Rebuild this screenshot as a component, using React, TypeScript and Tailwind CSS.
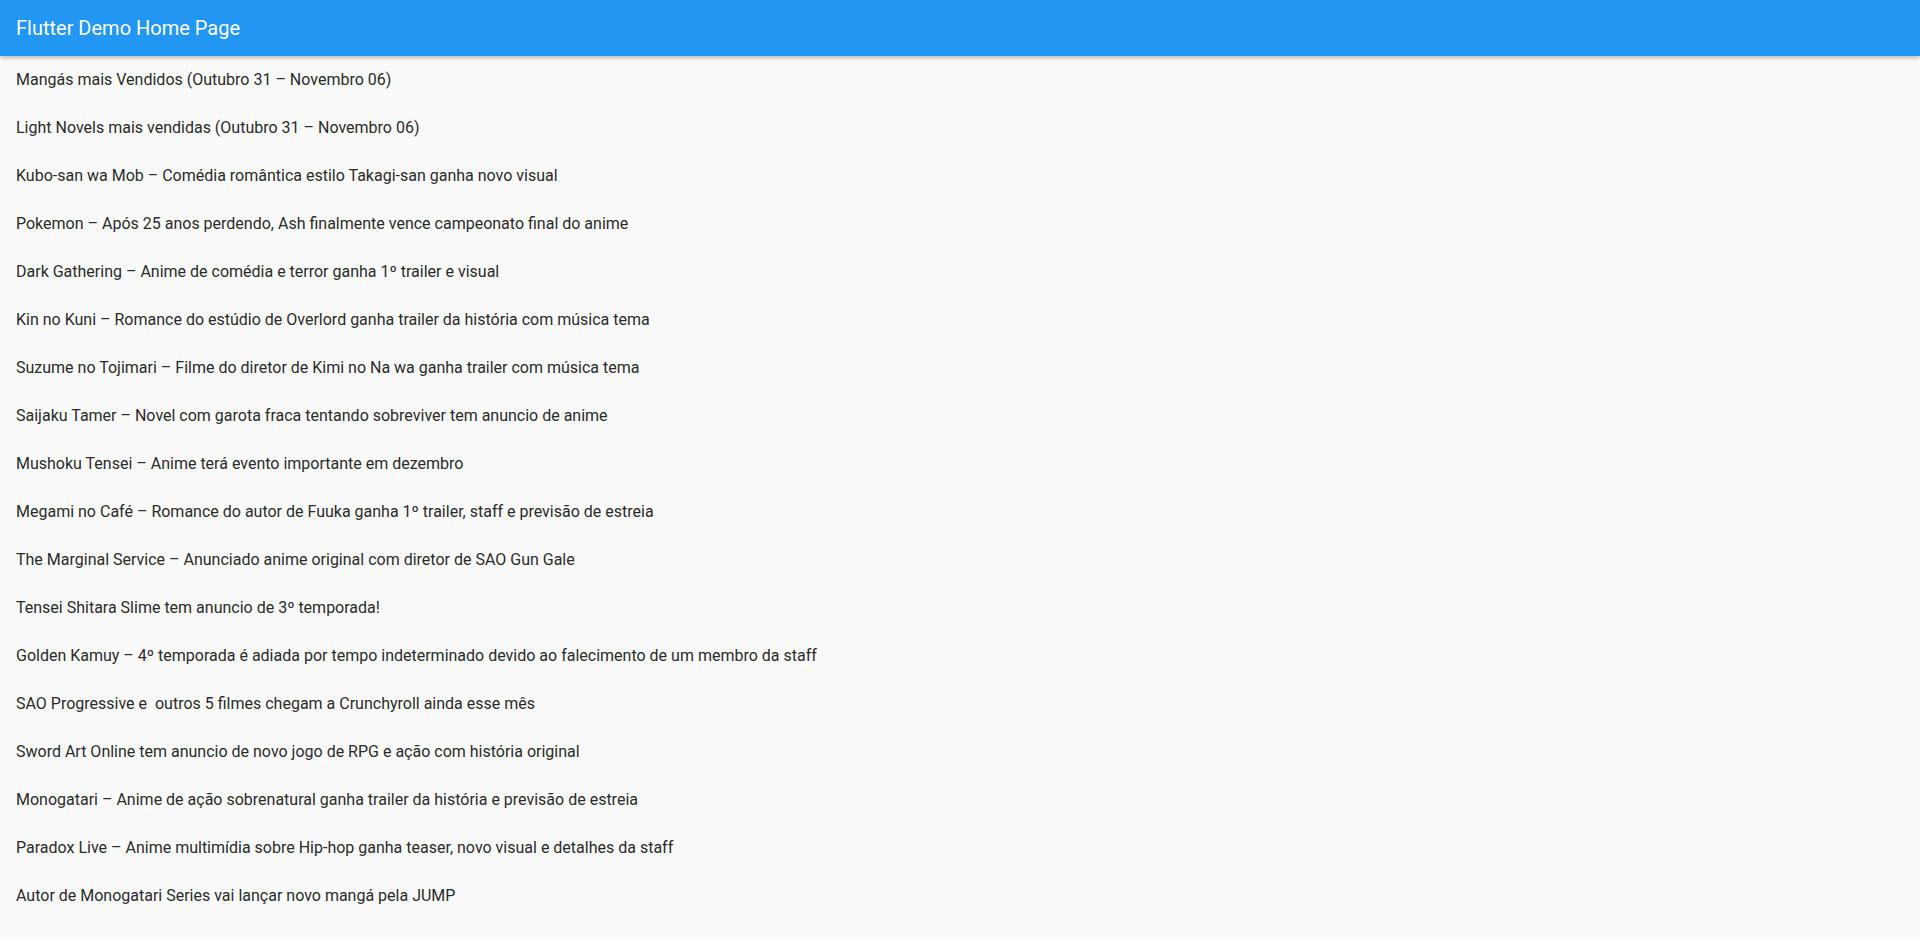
import React from 'react'

const news = [
  'Mangás mais Vendidos (Outubro 31 – Novembro 06)',
  'Light Novels mais vendidas (Outubro 31 – Novembro 06)',
  'Kubo-san wa Mob – Comédia romântica estilo Takagi-san ganha novo visual',
  'Pokemon – Após 25 anos perdendo, Ash finalmente vence campeonato final do anime',
  'Dark Gathering – Anime de comédia e terror ganha 1º trailer e visual',
  'Kin no Kuni – Romance do estúdio de Overlord ganha trailer da história com música tema',
  'Suzume no Tojimari – Filme do diretor de Kimi no Na wa ganha trailer com música tema',
  'Saijaku Tamer – Novel com garota fraca tentando sobreviver tem anuncio de anime',
  'Mushoku Tensei – Anime terá evento importante em dezembro',
  'Megami no Café – Romance do autor de Fuuka ganha 1º trailer, staff e previsão de estreia',
  'The Marginal Service – Anunciado anime original com diretor de SAO Gun Gale',
  'Tensei Shitara Slime tem anuncio de 3º temporada!',
  'Golden Kamuy – 4º temporada é adiada por tempo indeterminado devido ao falecimento de um membro da staff',
  'SAO Progressive e  outros 5 filmes chegam a Crunchyroll ainda esse mês',
  'Sword Art Online tem anuncio de novo jogo de RPG e ação com história original',
  'Monogatari – Anime de ação sobrenatural ganha trailer da história e previsão de estreia',
  'Paradox Live – Anime multimídia sobre Hip-hop ganha teaser, novo visual e detalhes da staff',
  'Autor de Monogatari Series vai lançar novo mangá pela JUMP',
]

export default function App() {
  return (
    <div
      className="h-[937px] w-full overflow-hidden bg-[#fafafa] flex flex-col"
      style={{ fontFamily: 'Roboto, "Liberation Sans", sans-serif' }}
    >
      <header className="h-14 shrink-0 bg-[#2196f3] flex items-center px-4 shadow-[0_2px_4px_rgba(0,0,0,0.25)] relative z-10">
        <h1 className="text-white text-[20px] font-normal">Flutter Demo Home Page</h1>
      </header>
      <div className="flex-1 flex flex-col">
        {news.map((title) => (
          <div key={title} className="h-12 shrink-0 flex items-center px-4">
            <span className="text-[16px] text-[#2b2b2b] whitespace-pre">{title}</span>
          </div>
        ))}
      </div>
    </div>
  )
}
